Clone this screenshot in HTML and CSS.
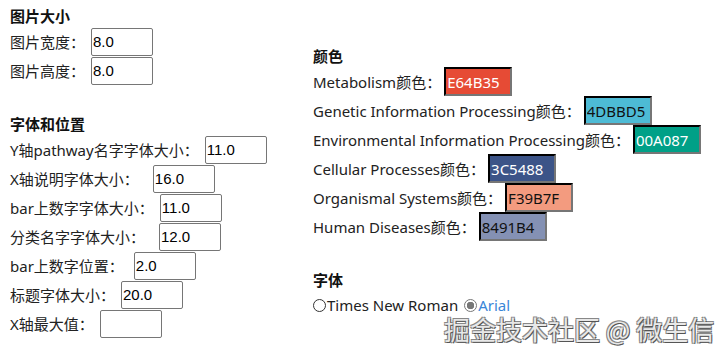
FILE: index.html
```html
<!DOCTYPE html>
<html lang="zh">
<head>
  <meta charset="UTF-8">
  <title>绘图参数</title>
  <link rel="stylesheet" href="styles.css">
</head>
<body>
  <!-- 左侧：大小、字体和位置 -->
  <div class="col col-left">
    <div class="sec-title">图片大小</div>
    <div class="row"><label>图片宽度：</label><input class="num" type="text" value="8.0"></div>
    <div class="row"><label>图片高度：</label><input class="num" type="text" value="8.0"></div>
    <div class="spacer"></div>
    <div class="sec-title">字体和位置</div>
    <div class="row"><label>Y轴pathway名字字体大小：</label><input class="num" type="text" value="11.0"></div>
    <div class="row"><label class="wide">X轴说明字体大小：</label><input class="num" type="text" value="16.0"></div>
    <div class="row"><label>bar上数字字体大小：</label><input class="num" type="text" value="11.0"></div>
    <div class="row"><label class="wide">分类名字字体大小：</label><input class="num" type="text" value="12.0"></div>
    <div class="row"><label class="mid">bar上数字位置：</label><input class="num" type="text" value="2.0"></div>
    <div class="row"><label>标题字体大小：</label><input class="num" type="text" value="20.0"></div>
    <div class="row"><label>X轴最大值：</label><input class="num" type="text" value=""></div>
  </div>

  <!-- 右侧：颜色、字体 -->
  <div class="col col-right">
    <div class="sec-title">颜色</div>
    <div class="row"><label>Metabolism颜色：</label><input class="color light" type="text" value="E64B35" style="background:#E64B35"></div>
    <div class="row"><label>Genetic Information Processing颜色：</label><input class="color" type="text" value="4DBBD5" style="background:#4DBBD5"></div>
    <div class="row"><label>Environmental Information Processing颜色：</label><input class="color light" type="text" value="00A087" style="background:#00A087"></div>
    <div class="row"><label>Cellular Processes颜色：</label><input class="color light" type="text" value="3C5488" style="background:#3C5488"></div>
    <div class="row"><label>Organismal Systems颜色：</label><input class="color" type="text" value="F39B7F" style="background:#F39B7F"></div>
    <div class="row"><label>Human Diseases颜色：</label><input class="color" type="text" value="8491B4" style="background:#8491B4"></div>
    <div class="spacer"></div>
    <div class="sec-title">字体</div>
    <div class="radios">
      <label class="opt"><input type="radio" name="font">Times New Roman</label>
      <label class="opt sel"><input type="radio" name="font" checked>Arial</label>
    </div>
  </div>

  <div class="watermark">掘金技术社区 @ 微生信</div>
</body>
</html>
```

FILE: styles.css
```css
body {
  margin: 0;
  padding: 6px 0 0 10px;
  font-family: 'Segoe UI', 'Noto Sans', 'Noto Sans CJK SC', sans-serif;
  font-size: 15px;
  color: #222;
  display: flex;
  align-items: flex-start;
  position: relative;
  height: 349px;
  overflow: hidden;
}
.col {
  display: flex;
  flex-direction: column;
}
.col-left {
  width: 303px;
}
.col-right {
  padding-top: 40px;
}
.sec-title {
  font-weight: bold;
  color: #111;
  height: 21px;
  line-height: 21px;
}
.row {
  height: 29px;
  display: flex;
  align-items: center;
  white-space: nowrap;
}
.row label {
  margin-right: 6px;
}
.row label.mid {
  margin-right: 10px;
}
.row label.wide {
  margin-right: 14px;
}
.col-right .row label {
  margin-right: 3px;
}
.spacer {
  height: 29px;
}
.num {
  box-sizing: border-box;
  width: 62px;
  height: 28px;
  border: 1px solid #767676;
  border-radius: 2px;
  padding: 0 1px;
  font-family: 'Liberation Sans', Arial, sans-serif;
  font-size: 15px;
  color: #000;
  outline: none;
}
.color {
  box-sizing: border-box;
  width: 68px;
  height: 29px;
  border: 2px inset #767676;
  border-top-color: #222;
  border-left-color: #222;
  padding: 0 1px;
  font-family: 'Segoe UI', 'Noto Sans', sans-serif;
  font-size: 15px;
  color: #111;
  outline: none;
}
.color.light {
  color: #fff;
}
.radios {
  display: flex;
  align-items: flex-end;
  height: 24px;
}
.opt {
  display: flex;
  align-items: center;
  margin-right: 6px;
}
.opt input {
  appearance: none;
  -webkit-appearance: none;
  box-sizing: border-box;
  margin: 0 1px 0 0;
  width: 13px;
  height: 13px;
  border: 1px solid #333;
  border-radius: 50%;
  background: #fff;
}
.opt input:checked {
  border-color: #777;
  background: radial-gradient(circle, #777 0 3.5px, #fff 4px);
}
.opt.sel {
  color: #3a86d8;
}
.watermark {
  position: absolute;
  left: 444px;
  top: 310px;
  white-space: nowrap;
  font-family: 'Noto Sans CJK SC', sans-serif;
  font-size: 26px;
  color: #e8e8e8;
  text-shadow: 1px 1px 0 #555, -1px -1px 0 #888, 1px -1px 0 #888, -1px 1px 0 #888;
}
```
